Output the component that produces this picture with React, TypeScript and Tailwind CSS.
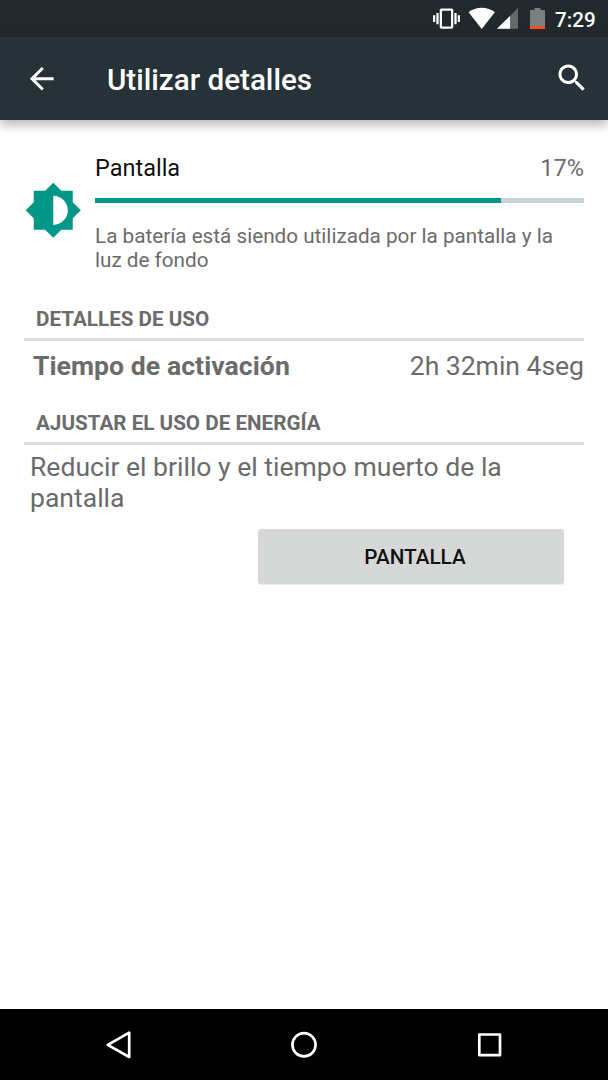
const DETAILS = [{ label: 'Tiempo de activación', value: '2h 32min 4seg' }]

const USAGE = {
  title: 'Pantalla',
  percent: '17%',
  barWidth: 83,
  summary: 'La batería está siendo utilizada por la pantalla y la luz de fondo',
}

function StatusBar() {
  return (
    <div className="h-[37px] bg-[#22292d] flex-shrink-0 flex items-start">
      <svg className="w-[27px] h-[27px] ml-[433px] mt-[5px] flex-shrink-0" viewBox="0 0 24 24" fill="white">
        <path d="M0 15h2V9H0v6zm3 2h2V7H3v10zm19-8v6h2V9h-2zm-3 8h2V7h-2v10zM16.5 3h-9C6.67 3 6 3.67 6 4.5v15c0 .83.67 1.5 1.5 1.5h9c.83 0 1.5-.67 1.5-1.5v-15c0-.83-.67-1.5-1.5-1.5zM16 19H8V5h8v14z" />
      </svg>
      <svg className="w-[28px] h-[22px] ml-[8px] mt-[7px] flex-shrink-0" viewBox="0 0 28 22" fill="white">
        <path d="M13.7 22L0.6 5.2C4.2 2.4 8.8 0.8 13.7 0.8s9.5 1.6 13.1 4.4z" />
      </svg>
      <svg className="w-[21px] h-[21px] ml-[1px] mt-[8px] flex-shrink-0" viewBox="0 0 21 21">
        <path d="M21 0v20.8H0z" fill="#64696c" />
        <path d="M13 8v12.8H0z" fill="white" />
      </svg>
      <svg className="w-[15px] h-[22px] ml-[12px] mt-[7px] flex-shrink-0" viewBox="0 0 15 22">
        <path d="M4.5 1h6v2H15v19H0V3h4.5z" fill="#7a7f81" />
        <path d="M0 19h15v3H0z" fill="#f4511e" />
      </svg>
      <span className="ml-[10px] mt-[8px] text-[20.7px] leading-[24px] font-medium text-white">7:29</span>
    </div>
  )
}

function AppBar() {
  return (
    <header className="h-[83px] bg-[#263238] flex-shrink-0 flex items-center shadow-[0_5px_10px_rgba(0,0,0,0.28)]">
      <svg className="w-[35.5px] h-[35.5px] ml-[24px] flex-shrink-0" viewBox="0 0 24 24" fill="white">
        <path d="M20 11H7.83l5.59-5.59L12 4l-8 8 8 8 1.41-1.41L7.83 13H20v-2z" />
      </svg>
      <h1 className="ml-[47.5px] mt-[4px] flex-1 text-[29.6px] leading-[35px] font-medium text-white">Utilizar detalles</h1>
      <svg className="w-[36px] h-[36px] mr-[18px] mb-[1px] flex-shrink-0" viewBox="0 0 24 24" fill="white">
        <path d="M15.5 14h-.79l-.28-.27C15.41 12.59 16 11.11 16 9.5 16 5.91 13.09 3 9.5 3S3 5.91 3 9.5 5.91 16 9.5 16c1.61 0 3.09-.59 4.23-1.57l.27.28v.79l5 4.99L20.49 19l-4.99-5zm-6 0C7.01 14 5 11.99 5 9.5S7.01 5 9.5 5 14 7.01 14 9.5 11.99 14 9.5 14z" />
      </svg>
    </header>
  )
}

function SectionTitle({ children }: { children: string }) {
  return (
    <h2 className="h-[35px] pt-[1px] pl-[12px] border-b-3 border-[#dcdcdc] text-[20.65px] leading-[24px] font-bold text-[#6b6b6b]">
      {children}
    </h2>
  )
}

function NavBar() {
  return (
    <nav className="h-[71px] bg-black flex-shrink-0 flex items-center justify-center gap-[157px]">
      <svg className="w-[28px] h-[28px]" viewBox="0 0 28 28" fill="none" stroke="white" strokeWidth={2.7} strokeLinejoin="round">
        <path d="M24.2 1.6v24.4L2.8 13.8z" />
      </svg>
      <svg className="w-[28px] h-[28px]" viewBox="0 0 28 28" fill="none" stroke="white" strokeWidth={2.7}>
        <circle cx="14" cy="13.8" r="11.6" />
      </svg>
      <svg className="w-[28px] h-[28px]" viewBox="0 0 28 28" fill="none" stroke="white" strokeWidth={2.7} strokeLinejoin="round">
        <path d="M4.3 3.5h20.7v20.7H4.3z" />
      </svg>
    </nav>
  )
}

export default function App() {
  return (
    <div className="w-[608px] h-[1080px] flex flex-col bg-white overflow-hidden font-[Roboto,sans-serif]">
      <StatusBar />
      <AppBar />

      <main className="flex-1 px-[24px] pt-[34px]">
        <div className="flex">
          <svg className="w-[58.5px] h-[58.5px] mt-[27px] mr-[12.5px] flex-shrink-0" viewBox="0 0 24 24" fill="#009688">
            <path d="M20 15.31L23.31 12 20 8.69V4h-4.69L12 .69 8.69 4H4v4.69L.69 12 4 15.31V20h4.69L12 23.31 15.31 20H20v-4.69zM12 18V6c3.31 0 6 2.69 6 6s-2.69 6-6 6z" />
          </svg>
          <div className="flex-1">
            <div className="flex justify-between text-[23.5px] leading-[28px]">
              <span className="text-[#111111]">{USAGE.title}</span>
              <span className="text-[#6b6b6b]">{USAGE.percent}</span>
            </div>
            <div className="h-[5px] mt-[16px] bg-[#cbd3d7]">
              <div className="h-full bg-[#009688]" style={{ width: `${USAGE.barWidth}%` }} />
            </div>
            <p className="mt-[21px] text-[20.7px] leading-[24px] text-[#6b6b6b]">{USAGE.summary}</p>
          </div>
        </div>

        <section className="mt-[34px]">
          <SectionTitle>DETALLES DE USO</SectionTitle>
          {DETAILS.map((row) => (
            <div key={row.label} className="mt-[9px] pl-[9px] flex justify-between text-[26.6px] leading-[31px] text-[#6b6b6b]">
              <span className="font-bold tracking-[0.05px]">{row.label}</span>
              <span className="tracking-[-0.05px]">{row.value}</span>
            </div>
          ))}
        </section>

        <section className="mt-[29px]">
          <SectionTitle>AJUSTAR EL USO DE ENERGÍA</SectionTitle>
          <p className="mt-[6px] pl-[6px] pr-[40px] text-[26.55px] leading-[31px] text-[#6b6b6b]">
            Reducir el brillo y el tiempo muerto de la pantalla
          </p>
          <div className="mt-[16px] pr-[20px] flex justify-end">
            <button className="w-[306px] h-[55px] pl-[8px] rounded-[3px] bg-[#d6d8d7] text-[20.7px] leading-[24px] font-medium text-[#111111] shadow-[0_1px_1px_rgba(0,0,0,0.08)]">
              PANTALLA
            </button>
          </div>
        </section>
      </main>

      <NavBar />
    </div>
  )
}
